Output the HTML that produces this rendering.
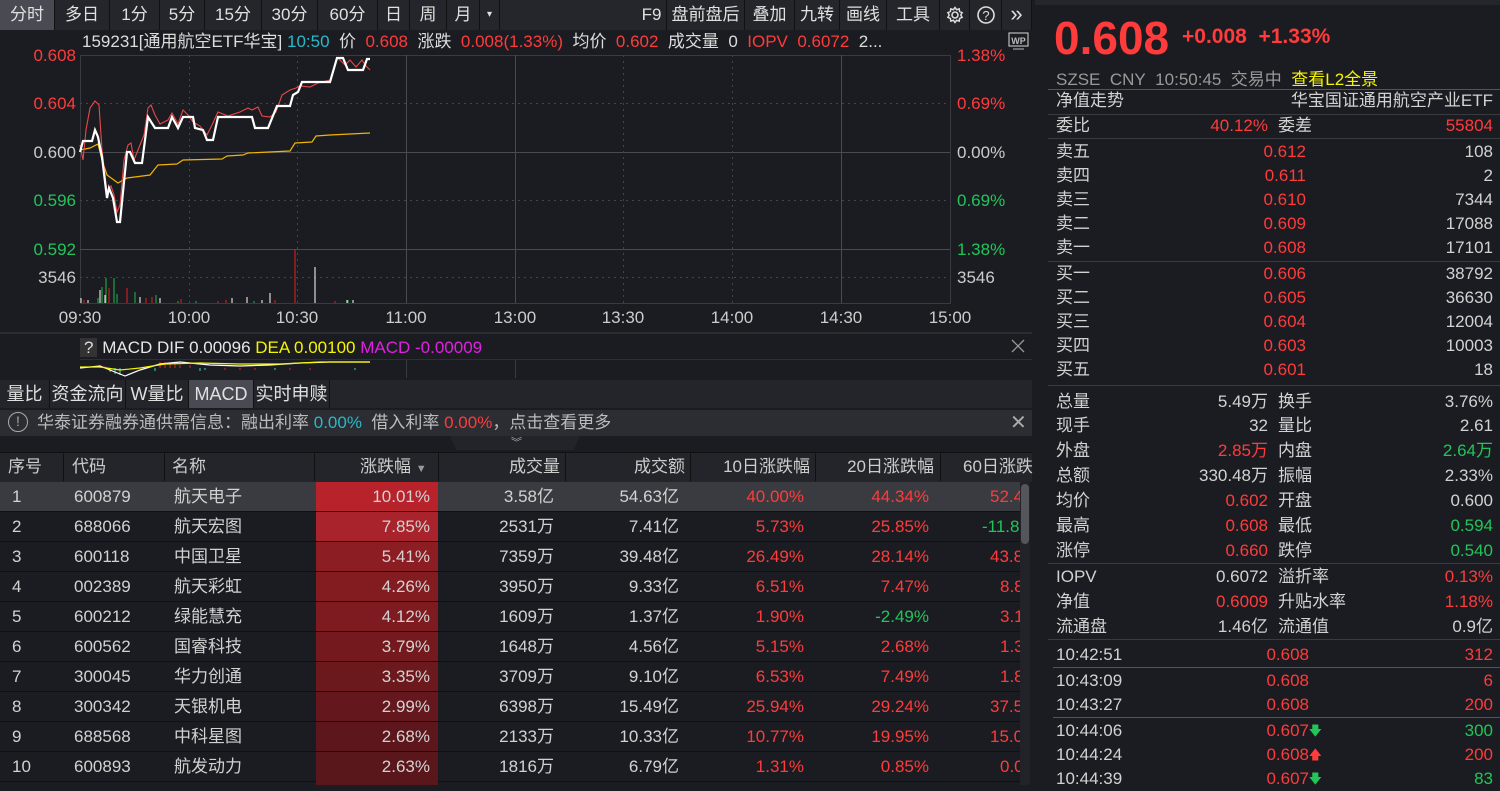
<!DOCTYPE html>
<html><head><meta charset="utf-8">
<style>
*{margin:0;padding:0;box-sizing:border-box}
body{width:1500px;height:785px;background:#1b1c21;overflow:hidden;font-family:"Liberation Sans","Noto Sans CJK SC",sans-serif;font-size:17px;color:#d2d2d2;position:relative}
.a{position:absolute;white-space:nowrap}
.r{color:#ff3b3b}.g{color:#21c55a}.w{color:#e6e6e6}.c{color:#2bb8c8}
.tb{position:absolute;top:0;height:30px;background:#25262b;border-right:1px solid #111;line-height:30px;text-align:center;font-size:17px;color:#e0e0e0}
.tb.sel{background:#4a4b52}
.tab{position:absolute;top:380px;height:28px;line-height:28px;background:#24252a;border-right:1px solid #111;text-align:center;color:#e0e0e0;font-size:18px}
.th{position:absolute;top:453px;height:28px;line-height:28px;color:#ccc}
.row{position:absolute;left:0;width:1020px;height:30px;border-bottom:1px solid #101114;line-height:30px}
.row span{position:absolute;top:0}
.rp{position:absolute;left:1056px;width:437px;height:24px;line-height:24px}
.rp .l{position:absolute;left:0}
.rp .v1{position:absolute;right:225px}
.rp .l2{position:absolute;left:222px}
.rp .v2{position:absolute;right:0}
.sep{position:absolute;left:1048px;width:452px;height:1px;background:#3a3b40}
</style></head><body>

<div class="a" style="left:0;top:0;width:1032px;height:30px;background:#25262b"></div>
<div class="tb sel" style="left:0;width:55px">分时</div>
<div class="tb" style="left:55px;width:55px">多日</div>
<div class="tb" style="left:110px;width:50px">1分</div>
<div class="tb" style="left:160px;width:45px">5分</div>
<div class="tb" style="left:205px;width:57px">15分</div>
<div class="tb" style="left:262px;width:56px">30分</div>
<div class="tb" style="left:318px;width:60px">60分</div>
<div class="tb" style="left:378px;width:32px">日</div>
<div class="tb" style="left:410px;width:37px">周</div>
<div class="tb" style="left:447px;width:33px">月</div>
<div class="tb" style="left:480px;width:20px;font-size:10px">▾</div>
<div class="tb" style="left:637px;width:30px">F9</div>
<div class="tb" style="left:667px;width:78px">盘前盘后</div>
<div class="tb" style="left:745px;width:50px">叠加</div>
<div class="tb" style="left:795px;width:45px">九转</div>
<div class="tb" style="left:840px;width:47px">画线</div>
<div class="tb" style="left:887px;width:53px">工具</div>
<div class="tb" style="left:940px;width:30px"><svg width="20" height="20" viewBox="0 0 20 20" style="margin-top:5px"><circle cx="10" cy="10" r="3" fill="none" stroke="#ddd" stroke-width="1.6"/><path d="M10 2.5l1.6 2.2 2.6-.8.4 2.7 2.5 1-1.3 2.4 1.3 2.4-2.5 1-.4 2.7-2.6-.8L10 17.5l-1.6-2.2-2.6.8-.4-2.7-2.5-1L4.2 10 2.9 7.6l2.5-1 .4-2.7 2.6.8z" fill="none" stroke="#ddd" stroke-width="1.5"/></svg></div>
<div class="tb" style="left:970px;width:32px"><svg width="20" height="20" viewBox="0 0 20 20" style="margin-top:5px"><circle cx="10" cy="10" r="8" fill="none" stroke="#ddd" stroke-width="1.6"/><text x="10" y="15" font-size="13" text-anchor="middle" fill="#ddd" font-family="Liberation Sans">?</text></svg></div>
<div class="tb" style="left:1002px;width:30px;font-size:22px;line-height:28px">»</div>

<svg class="a" style="left:0;top:30px" width="1032" height="350" viewBox="0 30 1032 350">
<g stroke="#3a3b40" stroke-width="1" fill="none">
<rect x="80.5" y="55.5" width="870" height="248"/>
<line x1="80" y1="152.5" x2="950" y2="152.5" stroke="#4a4b50"/>
<line x1="80" y1="249.5" x2="950" y2="249.5" stroke="#4a4b50"/>
<line x1="406.5" y1="55" x2="406.5" y2="303" stroke="#4a4b50"/>
<line x1="515.5" y1="55" x2="515.5" y2="303" stroke="#4a4b50"/>
<line x1="841.5" y1="55" x2="841.5" y2="303" stroke="#4a4b50"/>
</g>
<g stroke="#44454a" stroke-width="1" stroke-dasharray="2,4" fill="none">
<line x1="80" y1="103.5" x2="950" y2="103.5"/><line x1="80" y1="200.5" x2="950" y2="200.5"/><line x1="80" y1="277.5" x2="950" y2="277.5"/>
<line x1="189.5" y1="55" x2="189.5" y2="303"/><line x1="297.5" y1="55" x2="297.5" y2="303"/><line x1="623.5" y1="55" x2="623.5" y2="303"/><line x1="732.5" y1="55" x2="732.5" y2="303"/>
</g>
<line x1="0" y1="333" x2="1032" y2="333" stroke="#3a3b40"/>
<line x1="1033" y1="0" x2="1033" y2="785" stroke="#3a3b40"/>
<polyline fill="none" stroke="#f0b400" stroke-width="1.2" points="80,150 90,148 98,144 102,160 107,175 118,183 127,178 150,175 158,165 177,164 183,160 222,159 227,156 243,155 248,153 290,151 295,143 312,142 316,136 330,135 370,133"/>
<polyline fill="none" stroke="#e84848" stroke-width="1.1" points="80,145 83,160 86,130 90,108 95,101 99,105 102,150 107,192 111,186 114,195 117,212 120,205 124,160 128,145 131,143 134,160 138,150 144,135 148,108 151,105 155,115 160,124 168,120 172,113 178,124 183,110 188,115 193,122 200,126 207,135 212,125 218,112 228,116 240,112 248,108 252,110 258,107 262,116 270,117 276,112 282,95 290,90 296,88 300,86 310,87 318,83 330,80 337,58 340,60 345,65 350,60 356,67 362,60 366,66 370,70"/>
<polyline fill="none" stroke="#ffffff" stroke-width="2.2" points="80,152 83,141 92,141 95,130 98,137 102,157 107,198 109,188 113,198 117,222 120,222 127,152 130,152 135,163 142,163 148,117 155,128 168,128 172,117 178,128 183,117 193,117 195,128 203,130 207,140 213,140 218,117 252,117 255,128 268,128 277,106 290,106 293,95 298,92 302,82 330,82 337,58 343,58 348,70 363,70 367,59 370,59"/>
<g stroke-width="1">
<g stroke="#ffffff"><line x1="81" y1="303" x2="81" y2="298"/><line x1="88" y1="303" x2="88" y2="300"/><line x1="100" y1="303" x2="100" y2="290"/><line x1="105" y1="303" x2="105" y2="295"/><line x1="140" y1="303" x2="140" y2="297"/><line x1="160" y1="303" x2="160" y2="298"/><line x1="232" y1="303" x2="232" y2="298"/><line x1="247" y1="303" x2="247" y2="297"/><line x1="262" y1="303" x2="262" y2="300"/><line x1="270" y1="303" x2="270" y2="293"/><line x1="315" y1="303" x2="315" y2="267"/><line x1="347" y1="303" x2="347" y2="300"/><line x1="353" y1="303" x2="353" y2="300"/></g>
<g stroke="#e02020"><line x1="84" y1="303" x2="84" y2="300"/><line x1="109" y1="303" x2="109" y2="288"/><line x1="127" y1="303" x2="127" y2="288"/><line x1="146" y1="303" x2="146" y2="298"/><line x1="152" y1="303" x2="152" y2="297"/><line x1="181" y1="303" x2="181" y2="299"/><line x1="218" y1="303" x2="218" y2="301"/><line x1="226" y1="303" x2="226" y2="300"/><line x1="275" y1="303" x2="275" y2="300"/><line x1="295" y1="303" x2="295" y2="250"/><line x1="335" y1="303" x2="335" y2="301"/></g>
<g stroke="#1fb84a"><line x1="98" y1="303" x2="98" y2="298"/><line x1="102" y1="303" x2="102" y2="287"/><line x1="106" y1="303" x2="106" y2="278"/><line x1="114" y1="303" x2="114" y2="278"/><line x1="117" y1="303" x2="117" y2="294"/><line x1="135" y1="303" x2="135" y2="292"/><line x1="156" y1="303" x2="156" y2="295"/><line x1="178" y1="303" x2="178" y2="301"/><line x1="196" y1="303" x2="196" y2="301"/><line x1="254" y1="303" x2="254" y2="301"/><line x1="348" y1="303" x2="348" y2="300"/></g>
</g>
<g font-size="17" font-family="Liberation Sans" text-anchor="end">
<text x="76" y="61" fill="#ff3b3b">0.608</text><text x="76" y="109" fill="#ff3b3b">0.604</text><text x="76" y="158" fill="#cccccc">0.600</text><text x="76" y="206" fill="#21c55a">0.596</text><text x="76" y="255" fill="#21c55a">0.592</text><text x="76" y="283" fill="#cccccc">3546</text>
</g>
<g font-size="17" font-family="Liberation Sans">
<text x="957" y="61" fill="#ff3b3b">1.38%</text><text x="957" y="109" fill="#ff3b3b">0.69%</text><text x="957" y="158" fill="#cccccc">0.00%</text><text x="957" y="206" fill="#21c55a">0.69%</text><text x="957" y="255" fill="#21c55a">1.38%</text><text x="957" y="283" fill="#cccccc">3546</text>
</g>
<g font-size="17" font-family="Liberation Sans" fill="#cccccc" text-anchor="middle">
<text x="80" y="323">09:30</text><text x="189" y="323">10:00</text><text x="297" y="323">10:30</text><text x="406" y="323">11:00</text><text x="515" y="323">13:00</text><text x="623" y="323">13:30</text><text x="732" y="323">14:00</text><text x="841" y="323">14:30</text><text x="950" y="323">15:00</text>
</g>
<rect x="1009" y="33" width="19" height="13" fill="none" stroke="#bbb" stroke-width="1.2"/><text x="1018.5" y="44" font-size="9" font-weight="bold" fill="#bbb" text-anchor="middle" font-family="Liberation Sans">WP</text><line x1="1013" y1="49" x2="1024" y2="49" stroke="#bbb"/>
<line x1="80" y1="359.5" x2="1032" y2="359.5" stroke="#2e2f34"/>
<line x1="406.5" y1="360" x2="406.5" y2="378" stroke="#3a3b40"/><line x1="515.5" y1="360" x2="515.5" y2="378" stroke="#3a3b40"/>
<g stroke="#e02020"><line x1="100" y1="368" x2="100" y2="365"/><line x1="105" y1="368" x2="105" y2="366"/><line x1="160" y1="368" x2="160" y2="362"/><line x1="165" y1="368" x2="165" y2="362"/><line x1="170" y1="368" x2="170" y2="363"/><line x1="175" y1="368" x2="175" y2="364"/><line x1="180" y1="368" x2="180" y2="365"/><line x1="190" y1="368" x2="190" y2="365"/><line x1="225" y1="368" x2="225" y2="370"/><line x1="240" y1="368" x2="240" y2="370"/><line x1="255" y1="368" x2="255" y2="370"/><line x1="290" y1="368" x2="290" y2="370"/><line x1="310" y1="368" x2="310" y2="370"/></g>
<g stroke="#40d0d0"><line x1="110" y1="368" x2="110" y2="372"/><line x1="115" y1="368" x2="115" y2="374"/><line x1="120" y1="368" x2="120" y2="375"/><line x1="155" y1="368" x2="155" y2="371"/><line x1="200" y1="368" x2="200" y2="371"/><line x1="205" y1="368" x2="205" y2="370"/><line x1="275" y1="368" x2="275" y2="370"/><line x1="355" y1="368" x2="355" y2="370"/></g>
<polyline fill="none" stroke="#ffffff" stroke-width="1.2" points="80,368 100,366 115,372 125,376 140,370 160,364 180,362 210,365 240,366 270,365 300,363 330,362 350,362 370,362"/>
<polyline fill="none" stroke="#f5f500" stroke-width="1.2" points="80,367 100,367 120,370 140,368 165,364 200,363 240,364 280,364 320,362 370,362"/>
<g stroke="#999" stroke-width="1.3"><line x1="1012" y1="340" x2="1024" y2="352"/><line x1="1024" y1="340" x2="1012" y2="352"/></g>
</svg>

<div class="a" style="left:82px;top:31px;line-height:22px;color:#dcdcdc">159231[通用航空ETF华宝] <span class="c">10:50</span>&nbsp; 价&nbsp; <span class="r">0.608</span>&nbsp; 涨跌&nbsp; <span class="r">0.008(1.33%)</span>&nbsp; 均价&nbsp; <span class="r">0.602</span>&nbsp; 成交量&nbsp; 0&nbsp; <span class="r">IOPV&nbsp; 0.6072</span>&nbsp; 2...</div>
<div class="a" style="left:80px;top:337px;line-height:22px"><span style="background:#333;padding:0 4px;color:#ddd">?</span> <span class="w">MACD DIF 0.00096</span> <span style="color:#f5f500">DEA 0.00100</span> <span style="color:#e020e0">MACD -0.00009</span></div>

<div class="a" style="left:0;top:380px;width:1032px;height:28px;background:#24252a"></div>
<div class="tab" style="left:0;width:50px">量比</div>
<div class="tab" style="left:50px;width:76px">资金流向</div>
<div class="tab" style="left:126px;width:63px">W量比</div>
<div class="tab" style="left:189px;width:65px;background:#4a4b52">MACD</div>
<div class="tab" style="left:254px;width:76px">实时申赎</div>

<div class="a" style="left:0;top:410px;width:1032px;height:26px;background:#2c2d32"></div>
<div class="a" style="left:8px;top:412px;width:20px;height:20px;border:1.5px solid #aaa;border-radius:50%;text-align:center;line-height:17px;font-size:14px;color:#aaa">!</div>
<div class="a" style="left:37px;top:411px;line-height:24px;color:#bbb">华泰证券融券通供需信息：融出利率 <span class="c">0.00%</span>&nbsp; 借入利率 <span class="r">0.00%</span>，点击查看更多</div>
<div class="a" style="left:1010px;top:412px;font-size:20px;color:#aaa;line-height:22px">✕</div>
<div class="a" style="left:450px;top:436px;width:130px;height:14px;background:#232429;clip-path:polygon(0 0,100% 0,95% 100%,5% 100%)"></div>
<div class="a" style="left:511px;top:434px;font-size:11px;color:#aaa">︾</div>

<div class="a" style="left:0;top:452px;width:1032px;height:30px;background:#24252a;border-top:1px solid #111"></div>
<div class="a" style="left:63px;top:453px;width:1px;height:28px;background:#111"></div>
<div class="a" style="left:164px;top:453px;width:1px;height:28px;background:#111"></div>
<div class="a" style="left:314px;top:453px;width:1px;height:28px;background:#111"></div>
<div class="a" style="left:438px;top:453px;width:1px;height:28px;background:#111"></div>
<div class="a" style="left:565px;top:453px;width:1px;height:28px;background:#111"></div>
<div class="a" style="left:690px;top:453px;width:1px;height:28px;background:#111"></div>
<div class="a" style="left:815px;top:453px;width:1px;height:28px;background:#111"></div>
<div class="a" style="left:940px;top:453px;width:1px;height:28px;background:#111"></div>
<div class="th" style="left:8px">序号</div>
<div class="th" style="left:72px">代码</div>
<div class="th" style="left:172px">名称</div>
<div class="th" style="left:360px">涨跌幅 <span style="font-size:11px;color:#999">▼</span></div>
<div class="th" style="right:940px">成交量</div>
<div class="th" style="right:815px">成交额</div>
<div class="th" style="right:690px">10日涨跌幅</div>
<div class="th" style="right:566px">20日涨跌幅</div>
<div class="th" style="left:963px">60日涨跌</div>

<div class="a" style="left:0;top:482px;width:1032px;height:303px;overflow:hidden">
<div class="row" style="top:0;background:#3a3b40"><span style="left:12px">1</span><span style="left:74px">600879</span><span style="left:174px">航天电子</span><span style="left:316px;width:122px;height:29px;background:#b7222b;text-align:right;padding-right:8px">10.01%</span><span style="right:466px">3.58亿</span><span style="right:341px">54.63亿</span><span class="r" style="right:216px">40.00%</span><span class="r" style="right:91px">44.34%</span><span class="r" style="left:990px">52.4</span></div>
<div class="row" style="top:30px"><span style="left:12px">2</span><span style="left:74px">688066</span><span style="left:174px">航天宏图</span><span style="left:316px;width:122px;height:29px;background:#a8232b;text-align:right;padding-right:8px">7.85%</span><span style="right:466px">2531万</span><span style="right:341px">7.41亿</span><span class="r" style="right:216px">5.73%</span><span class="r" style="right:91px">25.85%</span><span class="g" style="left:982px">-11.8</span></div>
<div class="row" style="top:60px"><span style="left:12px">3</span><span style="left:74px">600118</span><span style="left:174px">中国卫星</span><span style="left:316px;width:122px;height:29px;background:#8c1d22;text-align:right;padding-right:8px">5.41%</span><span style="right:466px">7359万</span><span style="right:341px">39.48亿</span><span class="r" style="right:216px">26.49%</span><span class="r" style="right:91px">28.14%</span><span class="r" style="left:990px">43.8</span></div>
<div class="row" style="top:90px"><span style="left:12px">4</span><span style="left:74px">002389</span><span style="left:174px">航天彩虹</span><span style="left:316px;width:122px;height:29px;background:#831c21;text-align:right;padding-right:8px">4.26%</span><span style="right:466px">3950万</span><span style="right:341px">9.33亿</span><span class="r" style="right:216px">6.51%</span><span class="r" style="right:91px">7.47%</span><span class="r" style="left:1000px">8.8</span></div>
<div class="row" style="top:120px"><span style="left:12px">5</span><span style="left:74px">600212</span><span style="left:174px">绿能慧充</span><span style="left:316px;width:122px;height:29px;background:#7d1b20;text-align:right;padding-right:8px">4.12%</span><span style="right:466px">1609万</span><span style="right:341px">1.37亿</span><span class="r" style="right:216px">1.90%</span><span class="g" style="right:91px">-2.49%</span><span class="r" style="left:1000px">3.1</span></div>
<div class="row" style="top:150px"><span style="left:12px">6</span><span style="left:74px">600562</span><span style="left:174px">国睿科技</span><span style="left:316px;width:122px;height:29px;background:#741a1f;text-align:right;padding-right:8px">3.79%</span><span style="right:466px">1648万</span><span style="right:341px">4.56亿</span><span class="r" style="right:216px">5.15%</span><span class="r" style="right:91px">2.68%</span><span class="r" style="left:1000px">1.3</span></div>
<div class="row" style="top:180px"><span style="left:12px">7</span><span style="left:74px">300045</span><span style="left:174px">华力创通</span><span style="left:316px;width:122px;height:29px;background:#6c191e;text-align:right;padding-right:8px">3.35%</span><span style="right:466px">3709万</span><span style="right:341px">9.10亿</span><span class="r" style="right:216px">6.53%</span><span class="r" style="right:91px">7.49%</span><span class="r" style="left:1000px">1.8</span></div>
<div class="row" style="top:210px"><span style="left:12px">8</span><span style="left:74px">300342</span><span style="left:174px">天银机电</span><span style="left:316px;width:122px;height:29px;background:#64181d;text-align:right;padding-right:8px">2.99%</span><span style="right:466px">6398万</span><span style="right:341px">15.49亿</span><span class="r" style="right:216px">25.94%</span><span class="r" style="right:91px">29.24%</span><span class="r" style="left:990px">37.5</span></div>
<div class="row" style="top:240px"><span style="left:12px">9</span><span style="left:74px">688568</span><span style="left:174px">中科星图</span><span style="left:316px;width:122px;height:29px;background:#5d171c;text-align:right;padding-right:8px">2.68%</span><span style="right:466px">2133万</span><span style="right:341px">10.33亿</span><span class="r" style="right:216px">10.77%</span><span class="r" style="right:91px">19.95%</span><span class="r" style="left:990px">15.0</span></div>
<div class="row" style="top:270px"><span style="left:12px">10</span><span style="left:74px">600893</span><span style="left:174px">航发动力</span><span style="left:316px;width:122px;height:33px;background:#5a171b;text-align:right;padding-right:8px">2.63%</span><span style="right:466px">1816万</span><span style="right:341px">6.79亿</span><span class="r" style="right:216px">1.31%</span><span class="r" style="right:91px">0.85%</span><span class="r" style="left:1000px">0.0</span></div>
</div>
<div class="a" style="left:1020px;top:482px;width:10px;height:303px;background:#222328"></div>
<div class="a" style="left:1021px;top:484px;width:8px;height:60px;background:#55565b;border-radius:4px"></div>

<div class="a" style="left:1035px;top:0;width:465px;height:5px;background:#25262b"></div>
<div class="a r" style="left:1054px;top:12px;font-size:46px;font-weight:bold;line-height:52px">0.608</div>
<div class="a r" style="left:1182px;top:25px;font-size:21px;font-weight:bold">+0.008&nbsp;&nbsp;+1.33%</div>
<div class="a" style="left:1056px;top:69px;line-height:22px;color:#999">SZSE&nbsp; CNY&nbsp; 10:50:45&nbsp; 交易中&nbsp; <span style="color:#f5f500">查看L2全景</span></div>
<div class="sep" style="top:89px;background:#555"></div>
<div class="rp" style="top:89px"><span class="l">净值走势</span><span class="v2">华宝国证通用航空产业ETF</span></div>
<div class="sep" style="top:114px"></div>
<div class="rp" style="top:114px"><span class="l">委比</span><span class="v1 r">40.12%</span><span class="l2">委差</span><span class="v2 r">55804</span></div>
<div class="sep" style="top:138px"></div>
<div class="rp" style="top:140px"><span class="l">卖五</span><span class="v2 r" style="right:187px">0.612</span><span class="v2">108</span></div>
<div class="rp" style="top:164px"><span class="l">卖四</span><span class="v2 r" style="right:187px">0.611</span><span class="v2">2</span></div>
<div class="rp" style="top:188px"><span class="l">卖三</span><span class="v2 r" style="right:187px">0.610</span><span class="v2">7344</span></div>
<div class="rp" style="top:212px"><span class="l">卖二</span><span class="v2 r" style="right:187px">0.609</span><span class="v2">17088</span></div>
<div class="rp" style="top:236px"><span class="l">卖一</span><span class="v2 r" style="right:187px">0.608</span><span class="v2">17101</span></div>
<div class="sep" style="top:261px"></div>
<div class="rp" style="top:262px"><span class="l">买一</span><span class="v2 r" style="right:187px">0.606</span><span class="v2">38792</span></div>
<div class="rp" style="top:286px"><span class="l">买二</span><span class="v2 r" style="right:187px">0.605</span><span class="v2">36630</span></div>
<div class="rp" style="top:310px"><span class="l">买三</span><span class="v2 r" style="right:187px">0.604</span><span class="v2">12004</span></div>
<div class="rp" style="top:334px"><span class="l">买四</span><span class="v2 r" style="right:187px">0.603</span><span class="v2">10003</span></div>
<div class="rp" style="top:358px"><span class="l">买五</span><span class="v2 r" style="right:187px">0.601</span><span class="v2">18</span></div>
<div class="sep" style="top:385px"></div>
<div class="rp" style="top:390px"><span class="l">总量</span><span class="v1">5.49万</span><span class="l2">换手</span><span class="v2">3.76%</span></div>
<div class="rp" style="top:414px"><span class="l">现手</span><span class="v1">32</span><span class="l2">量比</span><span class="v2">2.61</span></div>
<div class="rp" style="top:439px"><span class="l">外盘</span><span class="v1 r">2.85万</span><span class="l2">内盘</span><span class="v2 g">2.64万</span></div>
<div class="rp" style="top:464px"><span class="l">总额</span><span class="v1">330.48万</span><span class="l2">振幅</span><span class="v2">2.33%</span></div>
<div class="rp" style="top:489px"><span class="l">均价</span><span class="v1 r">0.602</span><span class="l2">开盘</span><span class="v2">0.600</span></div>
<div class="rp" style="top:514px"><span class="l">最高</span><span class="v1 r">0.608</span><span class="l2">最低</span><span class="v2 g">0.594</span></div>
<div class="rp" style="top:539px"><span class="l">涨停</span><span class="v1 r">0.660</span><span class="l2">跌停</span><span class="v2 g">0.540</span></div>
<div class="sep" style="top:563px"></div>
<div class="rp" style="top:565px"><span class="l">IOPV</span><span class="v1">0.6072</span><span class="l2">溢折率</span><span class="v2 r">0.13%</span></div>
<div class="rp" style="top:590px"><span class="l">净值</span><span class="v1 r">0.6009</span><span class="l2">升贴水率</span><span class="v2 r">1.18%</span></div>
<div class="rp" style="top:615px"><span class="l">流通盘</span><span class="v1">1.46亿</span><span class="l2">流通值</span><span class="v2">0.9亿</span></div>
<div class="sep" style="top:639px"></div>
<div class="rp" style="top:643px"><span class="l">10:42:51</span><span class="v2 r" style="right:184px">0.608</span><span class="v2 r">312</span></div>
<div class="sep" style="top:667px;left:1053px;background:#555"></div>
<div class="rp" style="top:669px"><span class="l">10:43:09</span><span class="v2 r" style="right:184px">0.608</span><span class="v2 r">6</span></div>
<div class="rp" style="top:693px"><span class="l">10:43:27</span><span class="v2 r" style="right:184px">0.608</span><span class="v2 r">200</span></div>
<div class="sep" style="top:717px;left:1053px;background:#555"></div>
<div class="rp" style="top:719px"><span class="l">10:44:06</span><span class="v2 r" style="right:184px">0.607</span><span class="v2 g" style="right:171px;font-size:13px">🡇</span><span class="v2 g">300</span></div>
<div class="rp" style="top:743px"><span class="l">10:44:24</span><span class="v2 r" style="right:184px">0.608</span><span class="v2 r" style="right:171px;font-size:13px">🡅</span><span class="v2 r">200</span></div>
<div class="rp" style="top:767px"><span class="l">10:44:39</span><span class="v2 r" style="right:184px">0.607</span><span class="v2 g" style="right:171px;font-size:13px">🡇</span><span class="v2 g">83</span></div>
</body></html>
